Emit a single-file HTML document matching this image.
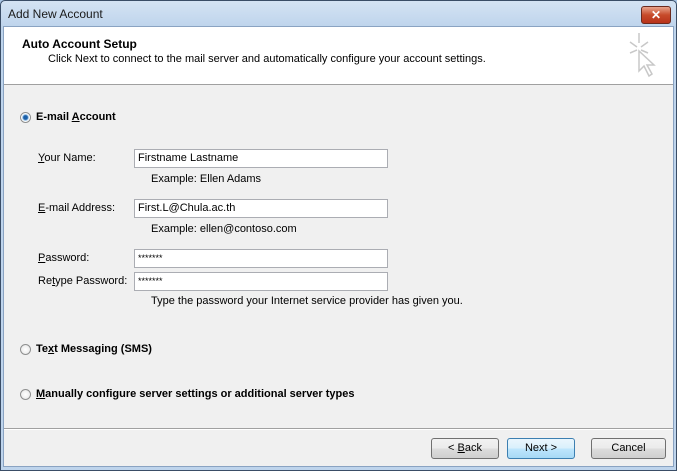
<!DOCTYPE html>
<html><head><style>
body{margin:0;width:677px;height:471px;overflow:hidden;font-family:"Liberation Sans",sans-serif;font-size:11px;color:#000;position:relative;background:#a9c5e4}
.a{position:absolute}
#win{left:0;top:0;width:675px;height:469px;border:1px solid #3a4d66;background:linear-gradient(#d4e3f3,#bed4ec 26px);border-radius:5px 5px 0 0}
#title{left:7px;top:6px;font-size:12px;color:#1a1a1a}
#close{left:640px;top:5px;width:28px;height:16px;background:linear-gradient(#e8a48c,#c74a2a 50%,#b8321a);border:1px solid #6b2a1e;border-radius:3px;color:#fff;font-weight:bold;text-align:center;font-size:12px;line-height:16px}
#client{left:2px;top:25px;width:669px;height:439px;background:#f0f0f0;border:1px solid #8aa3c2}
#hdr{left:0;top:0;width:669px;height:57px;background:#fff;border-bottom:1px solid #a0a0a0}
.in{width:254px;height:19px;background:#fff;border:1px solid #abadb3;box-sizing:border-box;padding-left:3px;line-height:17px;font-size:11px}
.rad{width:11px;height:11px;border-radius:50%;border:1px solid #8e8f8f;background:radial-gradient(#fff,#e4e4e4);box-sizing:border-box}
.btn{height:21px;border:1px solid #707070;border-radius:3px;background:linear-gradient(#f2f2f2,#ebebeb 50%,#dddddd 51%,#cfcfcf);text-align:center;line-height:19px;box-sizing:border-box;font-size:11px}
u{text-decoration:underline}
</style></head><body>
<div id="win" class="a">
<div id="title" class="a">Add New Account</div>
<div id="close" class="a">✕</div>
<div id="client" class="a">
 <div id="hdr" class="a">
  <div class="a" style="left:18px;top:10px;font-weight:bold;font-size:12px">Auto Account Setup</div>
  <div class="a" style="left:44px;top:26px">Click Next to connect to the mail server and automatically configure your account settings.</div>
  <svg class="a" style="left:622px;top:4px" width="36" height="50"><g stroke="#c8c8c8" stroke-width="1.5" fill="none"><path d="M13 2v10M4 11l7 5M22 11l-7 5M4 22l7-3M22 22l-7-3"/><path d="M13 20l0 20l5-5l5 10l3-2l-5-9l7 0z" fill="#fff"/></g></svg>
 </div>
 <div class="rad a" style="left:16px;top:85px;background:radial-gradient(#1a5fa8 30%,#9bc3e8 45%,#fff 60%)"></div>
 <div class="a" style="left:32px;top:84px;font-weight:bold">E-mail <u>A</u>ccount</div>
 <div class="a" style="left:34px;top:125px"><u>Y</u>our Name:</div>
 <div class="in a" style="left:130px;top:122px">Firstname Lastname</div>
 <div class="a" style="left:147px;top:146px">Example: Ellen Adams</div>
 <div class="a" style="left:34px;top:175px"><u>E</u>-mail Address:</div>
 <div class="in a" style="left:130px;top:172px">First.L@Chula.ac.th</div>
 <div class="a" style="left:147px;top:196px">Example: ellen@contoso.com</div>
 <div class="a" style="left:34px;top:225px"><u>P</u>assword:</div>
 <div class="in a" style="left:130px;top:222px;font-size:9px">*******</div>
 <div class="a" style="left:34px;top:248px">Re<u>t</u>ype Password:</div>
 <div class="in a" style="left:130px;top:245px;font-size:9px">*******</div>
 <div class="a" style="left:147px;top:268px">Type the password your Internet service provider has given you.</div>
 <div class="rad a" style="left:16px;top:317px"></div>
 <div class="a" style="left:32px;top:316px;font-weight:bold">Te<u>x</u>t Messaging (SMS)</div>
 <div class="rad a" style="left:16px;top:362px"></div>
 <div class="a" style="left:32px;top:361px;font-weight:bold"><u>M</u>anually configure server settings or additional server types</div>
 <div class="a" style="left:0;top:401px;width:669px;height:1px;background:#a0a0a0;border-bottom:1px solid #fff"></div>
 <div class="btn a" style="left:427px;top:411px;width:68px">&lt; <u>B</u>ack</div>
 <div class="btn a" style="left:503px;top:411px;width:68px;border-color:#3c7fb1;background:linear-gradient(#eaf6fd,#d9f0fc 50%,#bee6fd 51%,#a7d9f5)">Next &gt;</div>
 <div class="btn a" style="left:587px;top:411px;width:75px">Cancel</div>
</div>
</div>
</body></html>
